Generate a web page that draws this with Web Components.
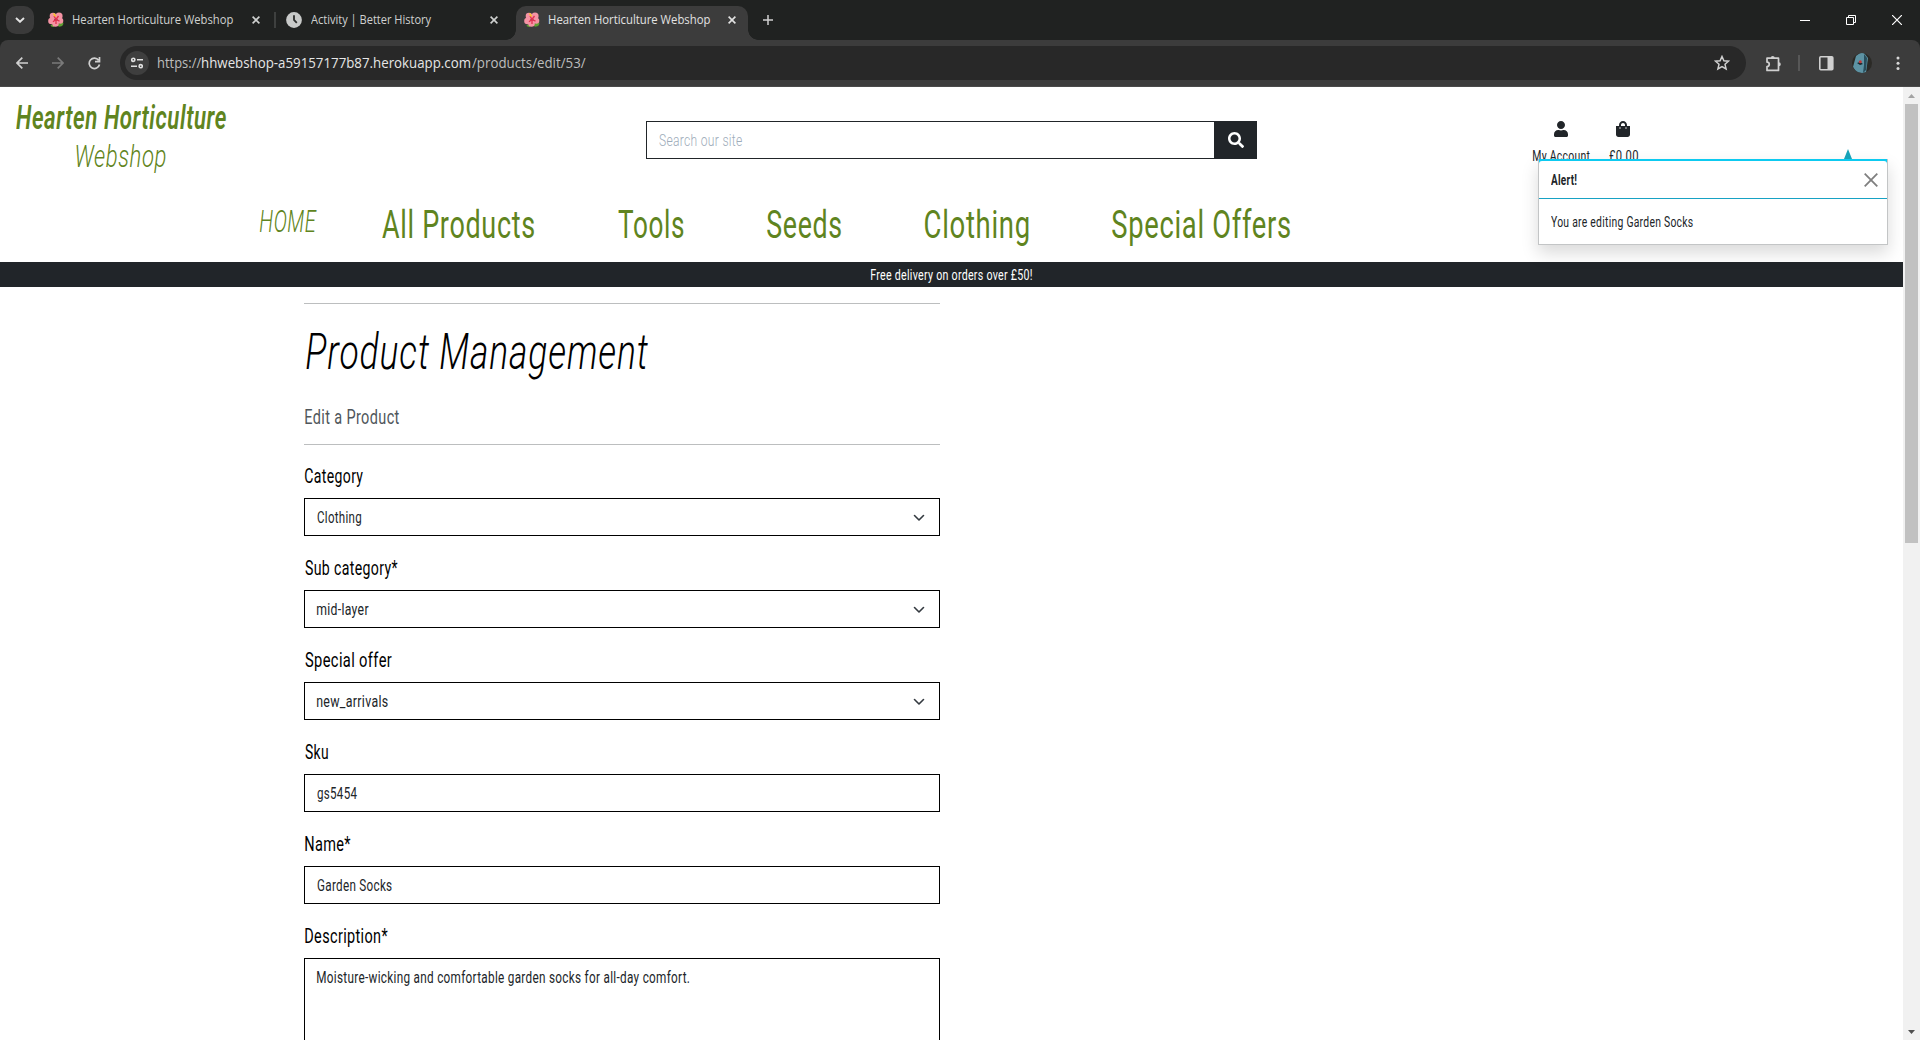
<!DOCTYPE html>
<html lang="en">
<head>
<meta charset="utf-8">
<title>Hearten Horticulture Webshop</title>
<style>
html,body{margin:0;height:100%;overflow:hidden;background:#fff}
body{font-family:Roboto,"Liberation Sans Narrow",sans-serif;color:#212529}
</style>
</head>
<body>
<app-window></app-window>
<script>
const define = (name, html) => customElements.define(name, class extends HTMLElement {
  connectedCallback() {
    if (this.shadowRoot) return;
    const t = document.createElement('template');
    t.innerHTML = typeof html === 'function' ? html(this) : html;
    this.attachShadow({mode:'open'}).appendChild(document.importNode(t.content, true));
  }
});

/* Condensed text: the box is as high as its capitals (cap) and as wide as its ink (w). */
customElements.define('cond-text', class extends HTMLElement {
  connectedCallback() {
    if (this.shadowRoot) return;
    const cap = +this.getAttribute('cap'), w = +this.getAttribute('w'), size = cap / 0.711;
    const root = this.attachShadow({mode:'open'});
    const cs = getComputedStyle(this), c = document.createElement('canvas').getContext('2d');
    const text = this.textContent.trim();
    const gap = cs.fontFamily.startsWith('Roboto') ? size * 0.025 : 0;
    root.innerHTML = `<style>:host{display:block;flex:none;width:${w}px;height:${cap}px;font-size:${size}px;line-height:${cap}px;white-space:nowrap}
      span{display:inline-block;vertical-align:top;transform-origin:0 50%;letter-spacing:${gap}px}</style><span><slot></slot></span>`;
    c.font = `${cs.fontStyle} ${cs.fontWeight} ${size}px ${cs.fontFamily}`;
    const m = c.measureText(text);
    const k = w / (m.actualBoundingBoxLeft + m.actualBoundingBoxRight + gap * (text.length - 1));
    root.querySelector('span').style.transform = `translateX(${m.actualBoundingBoxLeft * k}px) scaleX(${k})`;
  }
});

define('flower-icon', `<style>:host{display:block;width:16px;height:16px;flex:none}svg{display:block}</style>
<svg width="16" height="16" viewBox="0 0 16 16"><path d="M9 12l6-2c1 2 0 4-2.500 4.600-1.800.4-3-.5-3.500-2.600zM6 12l-3.500 1c.3 1.700 2 2.300 4 1.800z" fill="#5c9e31"/>
<g fill="#f593a4"><circle cx="5" cy="4" r="3.300"/><circle cx="11" cy="4" r="3.600"/><circle cx="3.500" cy="9" r="3.300"/><circle cx="12.300" cy="8.800" r="3"/><circle cx="7.500" cy="11.500" r="3.300"/></g>
<path d="M8 7.500L5 9.800M8 7.500l3.500 1.600M8 7.500V12M8 7.500L10.500 4M8 7.500L6 4" stroke="#e0304f" stroke-width="1.300" fill="none"/><path d="M5.500 1.500l2.200 3" stroke="#fbc02d" stroke-width="1.700"/></svg>`);

define('clock-icon', `<style>:host{display:block;flex:none}svg{display:block}</style>
<svg width="16" height="16"><circle cx="8" cy="8" r="7.900" fill="#c8cac9"/><path d="M8 3.300V8l2.800 2.800" stroke="#2b2d2c" stroke-width="1.800" fill="none"/></svg>`);

define('tab-item', el => `<style>
:host{display:flex;align-items:center;flex:none;box-sizing:border-box;width:232px;height:34px;margin-top:6px;padding:0 12px 6px 8px;color:#cfd1d0;position:relative}
:host([active]){background:#3c3c3c;border-radius:10px 10px 0 0;color:#e2e2e2}
:host([active])::before,:host([active])::after{content:"";position:absolute;bottom:0;width:10px;height:10px}
:host([active])::before{left:-10px;background:radial-gradient(circle at 0 0,#0000 9.500px,#3c3c3c 10px)}
:host([active])::after{right:-10px;background:radial-gradient(circle at 100% 0,#0000 9.500px,#3c3c3c 10px)}
cond-text{margin-left:8.500px}svg{margin-left:auto}</style>
<slot></slot><cond-text cap="8.600" w="${el.getAttribute('w')}">${el.getAttribute('label')}</cond-text>
<svg width="8" height="8"><path d="M.6.6l6.800 6.800M7.400.6L.6 7.400" stroke="currentColor" stroke-width="1.600"/></svg>`);

define('tab-strip', `<style>
:host{display:flex;height:40px;background:#202221;font-family:"Open Sans","Noto Sans",sans-serif;color:#fff}
.menu{width:28px;height:28px;margin:6px 6px 0;border-radius:10px;background:#3a3a3a;display:grid;place-items:center}
.sep{width:2px;height:16px;margin:12px 2px 0 2px;background:#3e403f}
.plus{margin:15px 0 0 15px}.ctl{display:flex;gap:36px;margin:15px 18px 0 auto}
svg{display:block;flex:none}</style>
<div class="menu"><svg width="10" height="6"><path d="M1 1l4 3.800L9 1" fill="none" stroke="#e3e3e3" stroke-width="1.900"/></svg></div>
<tab-item label="Hearten Horticulture Webshop" w="160"><flower-icon></flower-icon></tab-item>
<div class="sep"></div>
<tab-item label="Activity | Better History" w="121"><clock-icon></clock-icon></tab-item>
<tab-item active label="Hearten Horticulture Webshop" w="161" style="margin-left:6px"><flower-icon></flower-icon></tab-item>
<svg class="plus" width="10" height="10"><path d="M5 0v10M0 5h10" stroke="#d0d0d0" stroke-width="1.500"/></svg>
<div class="ctl">
<svg width="10" height="10"><path d="M0 5.500h10" stroke="#fff"/></svg>
<svg width="10" height="10"><path d="M.5 2.500h7v7h-7zM2.500 2V.5h7v7H8" stroke="#fff" fill="none"/></svg>
<svg width="10" height="10"><path d="M0 0l10 10M10 0L0 10" stroke="#fff" stroke-width="1.200"/></svg></div>`);

define('tool-bar', `<style>
:host{display:block;background:#202221;font-family:"Open Sans","Noto Sans",sans-serif}
.bar{display:flex;align-items:center;height:47px;box-sizing:border-box;background:#3c3c3c;border-radius:8px 8px 0 0;border-bottom:1px solid #4a4a4a;padding-left:16px}
svg{display:block;flex:none}.nav{display:flex;gap:24px;width:104px;flex:none}
.url{display:flex;align-items:center;width:1626px;height:34px;border-radius:17px;background:#282828;box-sizing:border-box;padding:0 16px 0 5px;color:#bdbdbd;flex:none}
.info{width:24px;height:24px;border-radius:12px;background:#3e3e3e;display:grid;place-items:center;margin-right:8.500px}
.host{color:#e6e6e6;margin:0 1.500px}.star{margin-left:auto}
.right{display:flex;align-items:center;margin-left:19px}</style>
<div class="bar"><div class="nav">
<svg width="12" height="12"><path d="M6.300.6L1 6l5.300 5.400M1 6h11" fill="none" stroke="#d0d0d0" stroke-width="1.700"/></svg>
<svg width="12" height="12"><path d="M5.700.6L11 6l-5.300 5.400M11 6H0" fill="none" stroke="#7a7a7a" stroke-width="1.700"/></svg>
<svg width="13" height="13"><path d="M10.600 3.200A5.200 5.200 0 1 0 11.500 7.500M11.500 0v4.600H7" fill="none" stroke="#d0d0d0" stroke-width="1.700"/></svg></div>
<div class="url"><div class="info"><svg width="12" height="12"><g fill="none" stroke="#e0e0e0" stroke-width="1.600"><circle cx="2.300" cy="2.800" r="1.600"/><path d="M6 2.800h6M0 9.200h6"/><circle cx="9.700" cy="9.200" r="1.600"/></g></svg></div>
<cond-text cap="10" w="43">https://</cond-text><cond-text class="host" cap="10" w="268">hhwebshop-a59157177b87.herokuapp.com</cond-text><cond-text cap="10" w="113.500">/products/edit/53/</cond-text>
<svg class="star" width="16" height="16"><path d="M8 1.500l1.900 4.300 4.600.4-3.500 3.100 1.100 4.600L8 11.500l-4.100 2.400L5 9.300 1.500 6.200l4.600-.4z" fill="none" stroke="#d0d0d0" stroke-width="1.500"/></svg></div>
<div class="right">
<svg width="17" height="17"><path d="M2 3.200h11.500v12.200H2v-3.800a2.200 2.200 0 0 0 0-4.500z" fill="none" stroke="#d0d0d0" stroke-width="1.700" stroke-linejoin="round"/><path d="M5.700 3a2 2 0 0 1 4 0zM13.800 7.300a2 2 0 0 1 0 4z" fill="#d0d0d0"/></svg>
<svg width="2" height="16" style="margin-left:16px"><path d="M1 0v16" stroke="#606060" stroke-width="1.500"/></svg>
<svg width="15" height="15" style="margin-left:19px"><rect x=".8" y=".8" width="13" height="13" rx="1" fill="none" stroke="#d0d0d0" stroke-width="1.600"/><path d="M8.500 1H14v13H8.500z" fill="#d0d0d0"/></svg>
<svg width="20" height="20" style="margin-left:18px"><defs><clipPath id="c"><circle cx="10" cy="10" r="10"/></clipPath></defs><g clip-path="url(#c)"><path fill="#2b2a26" d="M0 0h20v20H0z"/><path d="M4 3l4-3h4l4 5-2 15H5L1 14z" fill="#5d93a4"/><path d="M12 1l3 4-1 12-3 3 1-8z" fill="#284d5c"/><path d="M5 10l3-1 3 2-3 1z" fill="#17262c"/><circle cx="8.300" cy="8.700" r="1.500" fill="#c23a3a"/></g></svg>
<svg width="4" height="14" style="margin-left:24px"><g fill="#d8d8d8"><circle cx="2" cy="1.900" r="1.500"/><circle cx="2" cy="7.200" r="1.500"/><circle cx="2" cy="12.500" r="1.500"/></g></svg>
</div></div>`);

define('site-search', `<style>:host{display:flex;width:611px;height:38px;flex:none}
.in{flex:1;border:1px solid #212529;border-right:0;display:flex;align-items:center;padding:1px 0 0 12px;color:#9eacba;font-weight:300}
.b{width:43px;background:#212529;display:grid;place-items:center}</style>
<div class="in"><cond-text cap="11.500" w="83">Search our site</cond-text></div>
<div class="b"><svg width="16" height="16" viewBox="0 0 512 512"><path fill="#fff" d="M505 442.700L405.300 343c-4.500-4.500-10.600-7-17-7H372c27.600-35.300 44-79.700 44-128C416 93.100 322.900 0 208 0S0 93.100 0 208s93.100 208 208 208c48.300 0 92.700-16.400 128-44v16.300c0 6.400 2.500 12.500 7 17l99.700 99.700c9.400 9.400 24.600 9.400 33.900 0l28.300-28.300c9.400-9.400 9.400-24.600.1-34zM208 336c-70.700 0-128-57.200-128-128 0-70.700 57.200-128 128-128 70.700 0 128 57.200 128 128 0 70.700-57.200 128-128 128z"/></svg></div>`);

define('site-header', `<style>
:host{display:flex;flex-direction:column;height:175px;background:#fff}
.top{display:flex;align-items:flex-start;height:125px;box-sizing:border-box;flex:none}
.logo{width:211px;margin:19px 420px 0 15px;display:flex;flex-direction:column;align-items:center;gap:16px;color:#5f8420;font-style:italic;flex:none}
site-search{margin-top:34px}
.acc{display:flex;margin:34px 0 0 275.500px;gap:19px}
.acc div{display:flex;flex-direction:column;align-items:center;gap:13.500px}
.acc svg{margin-left:-1px}
nav{display:flex;align-items:flex-start;padding-left:382px;gap:83.800px;color:#5f8420}
.home{font-style:italic;font-weight:300;margin:-1px -19px 0 -122px}svg{display:block}</style>
<div class="top"><div class="logo"><cond-text cap="24" w="210" style="font-weight:600">Hearten Horticulture</cond-text><cond-text cap="22" w="90" style="font-weight:300">Webshop</cond-text></div>
<site-search></site-search>
<div class="acc"><div><svg width="14" height="16" viewBox="0 0 448 512"><path fill="#212529" d="M224 256c70.700 0 128-57.300 128-128S294.700 0 224 0 96 57.300 96 128s57.300 128 128 128zm89.600 32h-16.700c-22.200 10.200-46.900 16-72.900 16s-50.600-5.800-72.900-16h-16.700C60.200 288 0 348.200 0 422.400V464c0 26.500 21.500 48 48 48h352c26.500 0 48-21.500 48-48v-41.600c0-74.200-60.200-134.400-134.400-134.400z"/></svg><cond-text cap="11" w="57">My Account</cond-text></div>
<div><svg width="14" height="16" viewBox="0 0 448 512"><path fill="#212529" d="M352 160v-32C352 57.420 294.579 0 224 0 153.420 0 96 57.420 96 128v32H0v272c0 44.183 35.817 80 80 80h288c44.183 0 80-35.817 80-80V160h-96zm-192-32c0-35.290 28.710-64 64-64s64 28.710 64 64v32H160v-32zm160 120c-13.255 0-24-10.745-24-24s10.745-24 24-24 24 10.745 24 24-10.745 24-24 24zm-192 0c-13.255 0-24-10.745-24-24s10.745-24 24-24 24 10.745 24 24-10.745 24-24 24z"/></svg><cond-text cap="11" w="29">£0.00</cond-text></div></div></div>
<nav><cond-text class="home" cap="22" w="57">HOME</cond-text><cond-text cap="27" w="152">All Products</cond-text><cond-text cap="27" w="65.500">Tools</cond-text><cond-text cap="27" w="74">Seeds</cond-text><cond-text cap="27" w="103.500">Clothing</cond-text><cond-text cap="27" w="178">Special Offers</cond-text></nav>`);

define('delivery-bar', `<style>:host{display:flex;justify-content:center;align-items:center;height:25px;background:#212529;color:#fff}</style>
<cond-text cap="10" w="161">Free delivery on orders over £50!</cond-text>`);

define('form-field', el => `<style>:host{display:block;color:#000}
.l{margin:0 0 14px .5px}.box{height:${el.getAttribute('h') || 38}px;box-sizing:border-box;border:1px solid #000;display:flex;align-items:flex-start;justify-content:space-between;padding:13px 14px 0 12px;color:#212529}
svg{margin-top:2px}</style>
<cond-text class="l" cap="14" w="${el.getAttribute('lw')}">${el.getAttribute('label')}</cond-text>
<div class="box"><cond-text cap="11.300" w="${el.getAttribute('vw')}">${el.getAttribute('value')}</cond-text>
${el.hasAttribute('select') ? '<svg width="12" height="8"><path d="M1.500 1.500L6 6l4.500-4.500" fill="none" stroke="#343a40" stroke-width="1.600" stroke-linecap="round" stroke-linejoin="round"/></svg>' : ''}</div>`);

define('product-form', `<style>:host{display:flex;flex-direction:column;width:636px;margin:16px 0 0 304px;gap:26px}
.head{border:solid #bcbebf;border-width:1px 0;height:142px;box-sizing:border-box;padding-top:30px;margin-bottom:-1px}
.sub{margin:41px 0 0 .5px;color:#50565b}.h1{margin-left:2px;font-style:italic;font-weight:300;color:#000}</style>
<div class="head"><cond-text class="h1" cap="36" w="342">Product Management</cond-text><cond-text class="sub" cap="14" w="94">Edit a Product</cond-text></div>
<form-field select label="Category" lw="58.500" value="Clothing" vw="44"></form-field>
<form-field select label="Sub category*" lw="93" value="mid-layer" vw="52"></form-field>
<form-field select label="Special offer" lw="87" value="new_arrivals" vw="71"></form-field>
<form-field label="Sku" lw="23" value="gs5454" vw="40"></form-field>
<form-field label="Name*" lw="46" value="Garden Socks" vw="75"></form-field>
<form-field label="Description*" lw="83" value="Moisture-wicking and comfortable garden socks for all-day comfort." vw="372" h="260"></form-field>`);

define('alert-toast', `<style>
:host{display:block;position:absolute;left:1538px;top:72px;width:350px;height:86px;box-sizing:border-box;color:#212529}
.card{height:100%;box-sizing:border-box;background:#fff;border:1px solid #c3c5c6;border-top:0;box-shadow:0 8px 16px rgba(0,0,0,.15)}
.rule{height:5px;background:#0dcaf0}.rule i{display:block;height:3px;background:#fff;border-radius:4px 4px 0 0;position:relative;top:2px}
.head{height:35px;box-sizing:border-box;border-bottom:1px solid #17a2c4;display:flex;justify-content:space-between;padding:9px 9px 0 12px}
.msg{margin:18px 0 0 12px}
.arrow{position:absolute;left:306px;top:-10px;width:8px;height:10px;background:#17a2b8;clip-path:polygon(50% 0,100% 100%,0 100%)}</style>
<div class="arrow"></div><div class="card"><div class="rule"><i></i></div>
<div class="head"><cond-text cap="10.500" w="26" style="margin-top:2px;font-weight:700">Alert!</cond-text><svg width="14" height="14"><path d="M.7.7l12.600 12.600M13.300.7L.7 13.300" stroke="#7f7f7f" stroke-width="1.800"/></svg></div>
<cond-text class="msg" cap="10" w="142">You are editing Garden Socks</cond-text></div>`);

define('page-scrollbar', `<style>:host{display:flex;flex-direction:column;align-items:center;width:17px;background:#f1f1f1;flex:none}
.th{width:13px;height:439px;background:#c1c1c1;margin-top:6px}svg{display:block}.dn{margin:auto 0 6px}.up{margin-top:7px}</style>
<svg class="up" width="7" height="4"><path d="M3.500 0L7 4H0z" fill="#a3a3a3"/></svg><div class="th"></div>
<svg class="dn" width="7" height="4"><path d="M0 0h7L3.500 4z" fill="#505050"/></svg>`);

define('app-window', `<style>:host{display:flex;flex-direction:column;width:1920px;height:1040px;overflow:hidden}
.view{display:flex;flex:1;min-height:0;position:relative}.page{flex:1;min-width:0;overflow:hidden;background:#fff}</style>
<tab-strip></tab-strip><tool-bar></tool-bar>
<div class="view"><div class="page"><site-header></site-header><delivery-bar></delivery-bar><product-form></product-form></div><page-scrollbar></page-scrollbar><alert-toast></alert-toast></div>`);
</script>
</body>
</html>
